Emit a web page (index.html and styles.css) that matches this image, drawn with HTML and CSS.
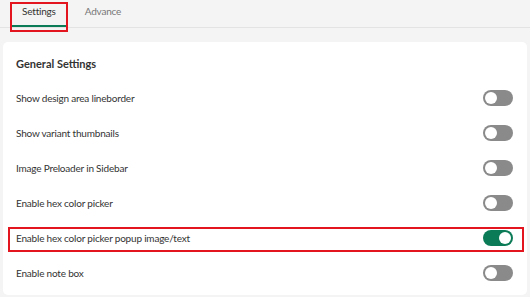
FILE: index.html
```html
<!DOCTYPE html>
<html lang="en">
<head>
    <meta charset="UTF-8">
    <meta name="viewport" content="width=device-width, initial-scale=1.0">
    <title>Settings</title>
    <link rel="stylesheet" href="styles.css">
</head>
<body>
    <div class="tabs">
        <div class="tab active marked">Settings</div>
        <div class="tab">Advance</div>
    </div>

    <div class="card">
        <h2>General Settings</h2>

        <div class="row">
            <span>Show design area lineborder</span>
            <span class="toggle"></span>
        </div>
        <div class="row">
            <span>Show variant thumbnails</span>
            <span class="toggle"></span>
        </div>
        <div class="row">
            <span>Image Preloader in Sidebar</span>
            <span class="toggle"></span>
        </div>
        <div class="row">
            <span>Enable hex color picker</span>
            <span class="toggle"></span>
        </div>
        <div class="row marked">
            <span>Enable hex color picker popup image/text</span>
            <span class="toggle on"></span>
        </div>
        <div class="row">
            <span>Enable note box</span>
            <span class="toggle"></span>
        </div>
    </div>
</body>
</html>
```

FILE: styles.css
```css
* {
    margin: 0;
    padding: 0;
    box-sizing: border-box;
}

body {
    font-family: Lato, 'Open Sans', sans-serif;
    font-size: 10px;
    letter-spacing: -0.2px;
    background: #f4f4f4;
    color: #333;
}

.tabs {
    display: flex;
    gap: 9px;
    padding-left: 12px;
    border-bottom: 1px solid #e3e3e3;
    height: 28px;
}

.tab {
    position: relative;
    padding: 5px 10px 0;
    color: #777;
    height: 27px;
    font-size: 10px;
}

.tab.active {
    color: #333;
    border-bottom: 2px solid #0b7a56;
}

/* red annotation boxes */
.marked::after {
    content: '';
    position: absolute;
    border: 2px solid #e3151e;
    pointer-events: none;
}

.tab.marked::after {
    top: 2px;
    left: -2px;
    right: -2px;
    bottom: -7px;
}

.card {
    margin: 14px 3px 0;
    background: white;
    border-radius: 5px;
    padding: 14px 14px 2px 13px;
    height: 253px;
}

.card h2 {
    font-size: 11px;
    font-weight: 700;
    letter-spacing: 0;
    color: #333;
    line-height: 16px;
    margin-bottom: 8px;
}

.row {
    position: relative;
    display: flex;
    align-items: center;
    justify-content: space-between;
    height: 35px;
}

.row.marked::after {
    top: 7px;
    bottom: 3px;
    left: -8px;
    right: -11px;
}

.toggle {
    position: relative;
    width: 30px;
    height: 16px;
    border-radius: 8px;
    background: #8a8a8a;
}

.toggle::before {
    content: '';
    position: absolute;
    top: 2px;
    left: 2px;
    width: 12px;
    height: 12px;
    border-radius: 50%;
    background: white;
}

.toggle.on {
    background: #0b7a56;
}

.toggle.on::before {
    left: 16px;
}
```
